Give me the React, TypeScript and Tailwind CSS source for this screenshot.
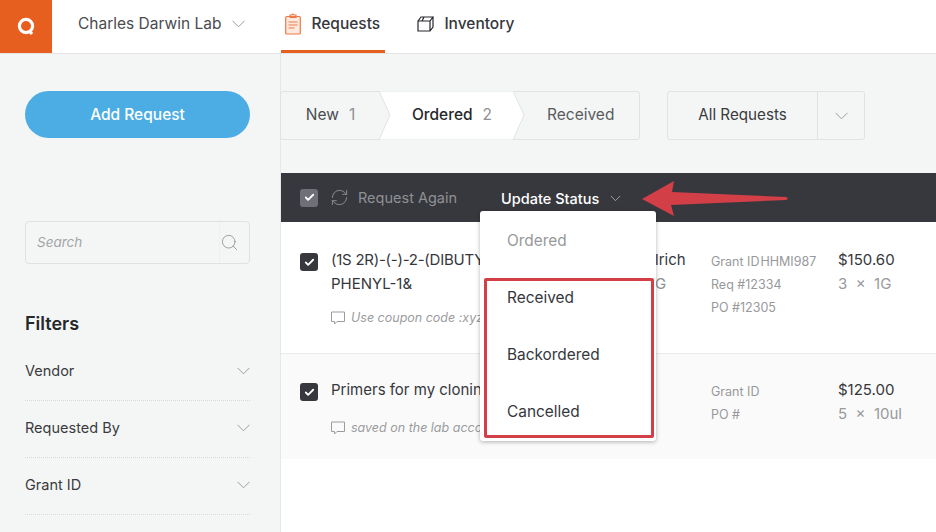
import { ChevronDown, RefreshCw, Search, Check } from "lucide-react";

function Chevron({ className }: { className?: string }) {
  return (
    <svg className={className} width="13" height="8" viewBox="0 0 13 8" fill="none" stroke="#9a9da0" strokeWidth="1">
      <path d="M.5.8 6.5 6.8 12.5.8" />
    </svg>
  );
}

function Checkbox({ muted }: { muted?: boolean }) {
  return (
    <div className={`flex h-[18px] w-[18px] items-center justify-center rounded-[3px] ${muted ? "bg-[#6f7077]" : "bg-[#37383d]"}`}>
      <Check size={11} strokeWidth={4} className="text-white" />
    </div>
  );
}

function Note({ text }: { text: string }) {
  return (
    <div className="flex items-center gap-[6px] whitespace-nowrap text-[12.5px] italic text-[#9a9c9e]">
      <svg width="14" height="14" viewBox="0 0 14 14" fill="none" stroke="#9a9c9e" strokeWidth="1">
        <path d="M.5 1h13v9.5H6L3.5 13v-2.5H.5z" />
      </svg>
      <span>{text}</span>
    </div>
  );
}

function FilterRow({ label }: { label: string }) {
  return (
    <div className="flex h-[57px] items-center justify-between border-b border-dotted border-[#d5d8d8] pb-[2px] text-[14.5px] text-[#3a3b40]">
      <span>{label}</span>
      <Chevron />
    </div>
  );
}

export default function App() {
  return (
    <div className="flex h-[532px] w-[936px] flex-col overflow-hidden bg-[#f4f6f6] font-['Inter','Liberation_Sans',sans-serif] text-[#36373c]">
      <header className="flex h-[54px] shrink-0 items-stretch border-b border-[#e3e5e5] bg-white">
        <div className="flex w-[52px] items-center justify-center bg-[#e75f1e]">
          <svg width="18" height="19" viewBox="0 0 18 19" fill="none" stroke="white" strokeWidth="3.2">
            <circle cx="9" cy="9" r="6.6" />
            <path d="M12 13.5 15 17" />
          </svg>
        </div>
        <div className="ml-[26px] flex items-center gap-[11px] pb-[5px] text-[15.5px] text-[#4a4b50]">
          <span>Charles Darwin Lab</span>
          <Chevron />
        </div>
        <div className="ml-[36px] flex w-[104px] items-center gap-[10px] border-b-[3px] border-[#e75f1e] pb-[2px] pl-[4px] text-[15.5px] font-medium text-[#36373c]">
          <svg width="16" height="22" viewBox="0 0 16 22" fill="none" stroke="#ef7a45" strokeWidth="1.2">
            <rect x=".7" y="3.5" width="14.6" height="17.5" rx="1" fill="#fde9df" />
            <path d="M5 3.5V2h2c0-1.2 2-1.2 2 0h2v2.5H5zM3.5 9h9M3.5 12h9M3.5 15h6" />
          </svg>
          <span>Requests</span>
        </div>
        <div className="ml-[32px] flex items-center gap-[10px] pb-[5px] text-[15.5px] font-medium">
          <svg width="17" height="16" viewBox="0 0 17 16" fill="none" stroke="#26272b" strokeWidth="1.2">
            <path d="M1 5h12v10H1zM1 5l3-4h12l-3 4M16 1v10l-3 4M5 5l2-4" />
          </svg>
          <span>Inventory</span>
        </div>
      </header>

      <div className="flex min-h-0 flex-1">
        <aside className="w-[280px] shrink-0 pl-[25px] pr-[30px] pt-[37px]">
          <button className="flex h-[47px] w-[225px] items-center justify-center rounded-full bg-[#4cade4] text-[15.5px] font-medium text-white">
            Add Request
          </button>
          <div className="mt-[83px] flex h-[43px] w-[225px] items-center rounded-[4px] border border-[#dfe2e2]">
            <span className="flex-1 pl-[11px] text-[13.5px] italic text-[#a2a5a6]">Search</span>
            <div className="flex h-full w-[30px] items-center border-l border-[#eef0f0]">
              <Search size={19} strokeWidth={1} className="text-[#85888a]" />
            </div>
          </div>
          <h2 className="mt-[49px] text-[18px] font-semibold leading-[22px] text-[#26272b]">Filters</h2>
          <div className="mt-[9px]">
            <FilterRow label="Vendor" />
            <FilterRow label="Requested By" />
            <FilterRow label="Grant ID" />
          </div>
        </aside>

        <main className="relative min-w-0 flex-1 border-l border-[#e6e8e8] bg-white">
          <div className="flex h-[119px] items-start gap-[27px] bg-[#f4f6f6] pt-[37px]">
            <div className="relative -ml-px flex h-[49px] w-[360px] items-center rounded-[3px] border border-[#e1e3e3] pb-[2px] text-[15.5px]">
              <div className="flex w-[99px] justify-center gap-[10px] text-[#4a4b50]">
                <span>New</span>
                <span className="text-[#8e9092]">1</span>
              </div>
              <svg className="absolute left-[98px] top-[-1px]" width="146" height="49" viewBox="0 0 146 49" fill="white" stroke="#e1e3e3">
                <path d="M0 0H134L145 24 134 49H0L11 24Z" />
              </svg>
              <div className="relative flex w-[136px] justify-center gap-[10px] pl-[8px] font-medium text-[#26272b]">
                <span>Ordered</span>
                <span className="font-normal text-[#8e9092]">2</span>
              </div>
              <span className="relative ml-[31px] text-[#5a5b60]">Received</span>
            </div>
            <div className="flex h-[49px] w-[198px] items-center rounded-[3px] border border-[#e1e3e3] text-[15.2px]">
              <span className="flex-1 pb-px text-center text-[#3a3b40]">All Requests</span>
              <div className="flex h-full w-[47px] items-center justify-center border-l border-[#e1e3e3]">
                <Chevron />
              </div>
            </div>
          </div>

          <div className="flex h-[49px] items-center bg-[#37383d] pl-[19px]">
            <Checkbox muted />
            <RefreshCw size={19} strokeWidth={1} className="ml-[12px] text-[#9d9ea2]" />
            <span className="ml-[9px] text-[14.5px] text-[#8f9094]">Request Again</span>
            <span className="ml-[44px] mt-[3px] text-[14.5px] font-medium text-white">Update Status</span>
            <ChevronDown size={17} strokeWidth={1} className="ml-[8px] mt-[2px] text-[#c9cacc]" />
          </div>

          <div className="flex h-[132px] border-b border-[#e9ebeb] bg-white pl-[19px]">
            <div className="mt-[31px]"><Checkbox /></div>
            <div className="ml-[13px] mt-[26px] w-[380px] shrink-0">
              <div className="flex whitespace-nowrap text-[15px] leading-[24px]">
                <span className="w-[324px] shrink-0 overflow-hidden tracking-[-0.25px]">(1S 2R)-(-)-2-(DIBUTYLAMINO)</span>
                <span>lrich</span>
              </div>
              <div className="flex text-[15px] leading-[24px]">
                <span className="w-[324px] shrink-0">PHENYL-1&amp;</span>
                <span className="text-[#8e9092]">G</span>
              </div>
              <div className="mt-[13px]"><Note text="Use coupon code :xyz123" /></div>
            </div>
            <div className="mt-[28px] w-[127px] text-[12.5px] leading-[23px] text-[#97999b]">
              <div>
                <span>Grant ID</span>
                <span className="ml-[1px]">HHMI987</span>
              </div>
              <div>Req #12334</div>
              <div>PO #12305</div>
            </div>
            <div className="mt-[26px] text-[15px] leading-[24px]">
              <div>$150.60</div>
              <div className="text-[#97999b]">3&nbsp; ×&nbsp; 1G</div>
            </div>
          </div>

          <div className="flex h-[105px] bg-[#fafafa] pl-[19px]">
            <div className="mt-[29px]"><Checkbox /></div>
            <div className="ml-[13px] mt-[24px] w-[380px] shrink-0">
              <div className="whitespace-nowrap text-[15px] leading-[24px]">Primers for my cloning</div>
              <div className="mt-[17px]"><Note text="saved on the lab account" /></div>
            </div>
            <div className="mt-[26px] w-[127px] text-[12.5px] leading-[23px] text-[#97999b]">
              <div>Grant ID</div>
              <div>PO #</div>
            </div>
            <div className="mt-[24px] text-[15px] leading-[24px]">
              <div>$125.00</div>
              <div className="text-[#97999b]">5&nbsp; ×&nbsp; 10ul</div>
            </div>
          </div>

          <div className="absolute left-[199px] top-[157px] w-[176px] rounded-[3px] bg-white pl-[27px] pt-px pb-px text-[15.4px] text-[#36373c] shadow-[0_1px_4px_rgba(0,0,0,0.3)]">
            <div className="flex h-[57px] items-center text-[#97999b]">Ordered</div>
            <div className="flex h-[57px] items-center">Received</div>
            <div className="flex h-[57px] items-center">Backordered</div>
            <div className="flex h-[57px] items-center">Cancelled</div>
            <div className="absolute left-[4px] right-[2px] top-[67px] bottom-[3px] rounded-[2px] border-[3px] border-[#d23f46]" />
          </div>

          <svg className="absolute left-[360px] top-[126px]" width="150" height="36" viewBox="0 0 150 36">
            <path d="M1 19 33 1 31 12 145 17c2 .5 2 2.5 0 3L30 25 33 36Z" fill="#d33f47" />
          </svg>
        </main>
      </div>
    </div>
  );
}
